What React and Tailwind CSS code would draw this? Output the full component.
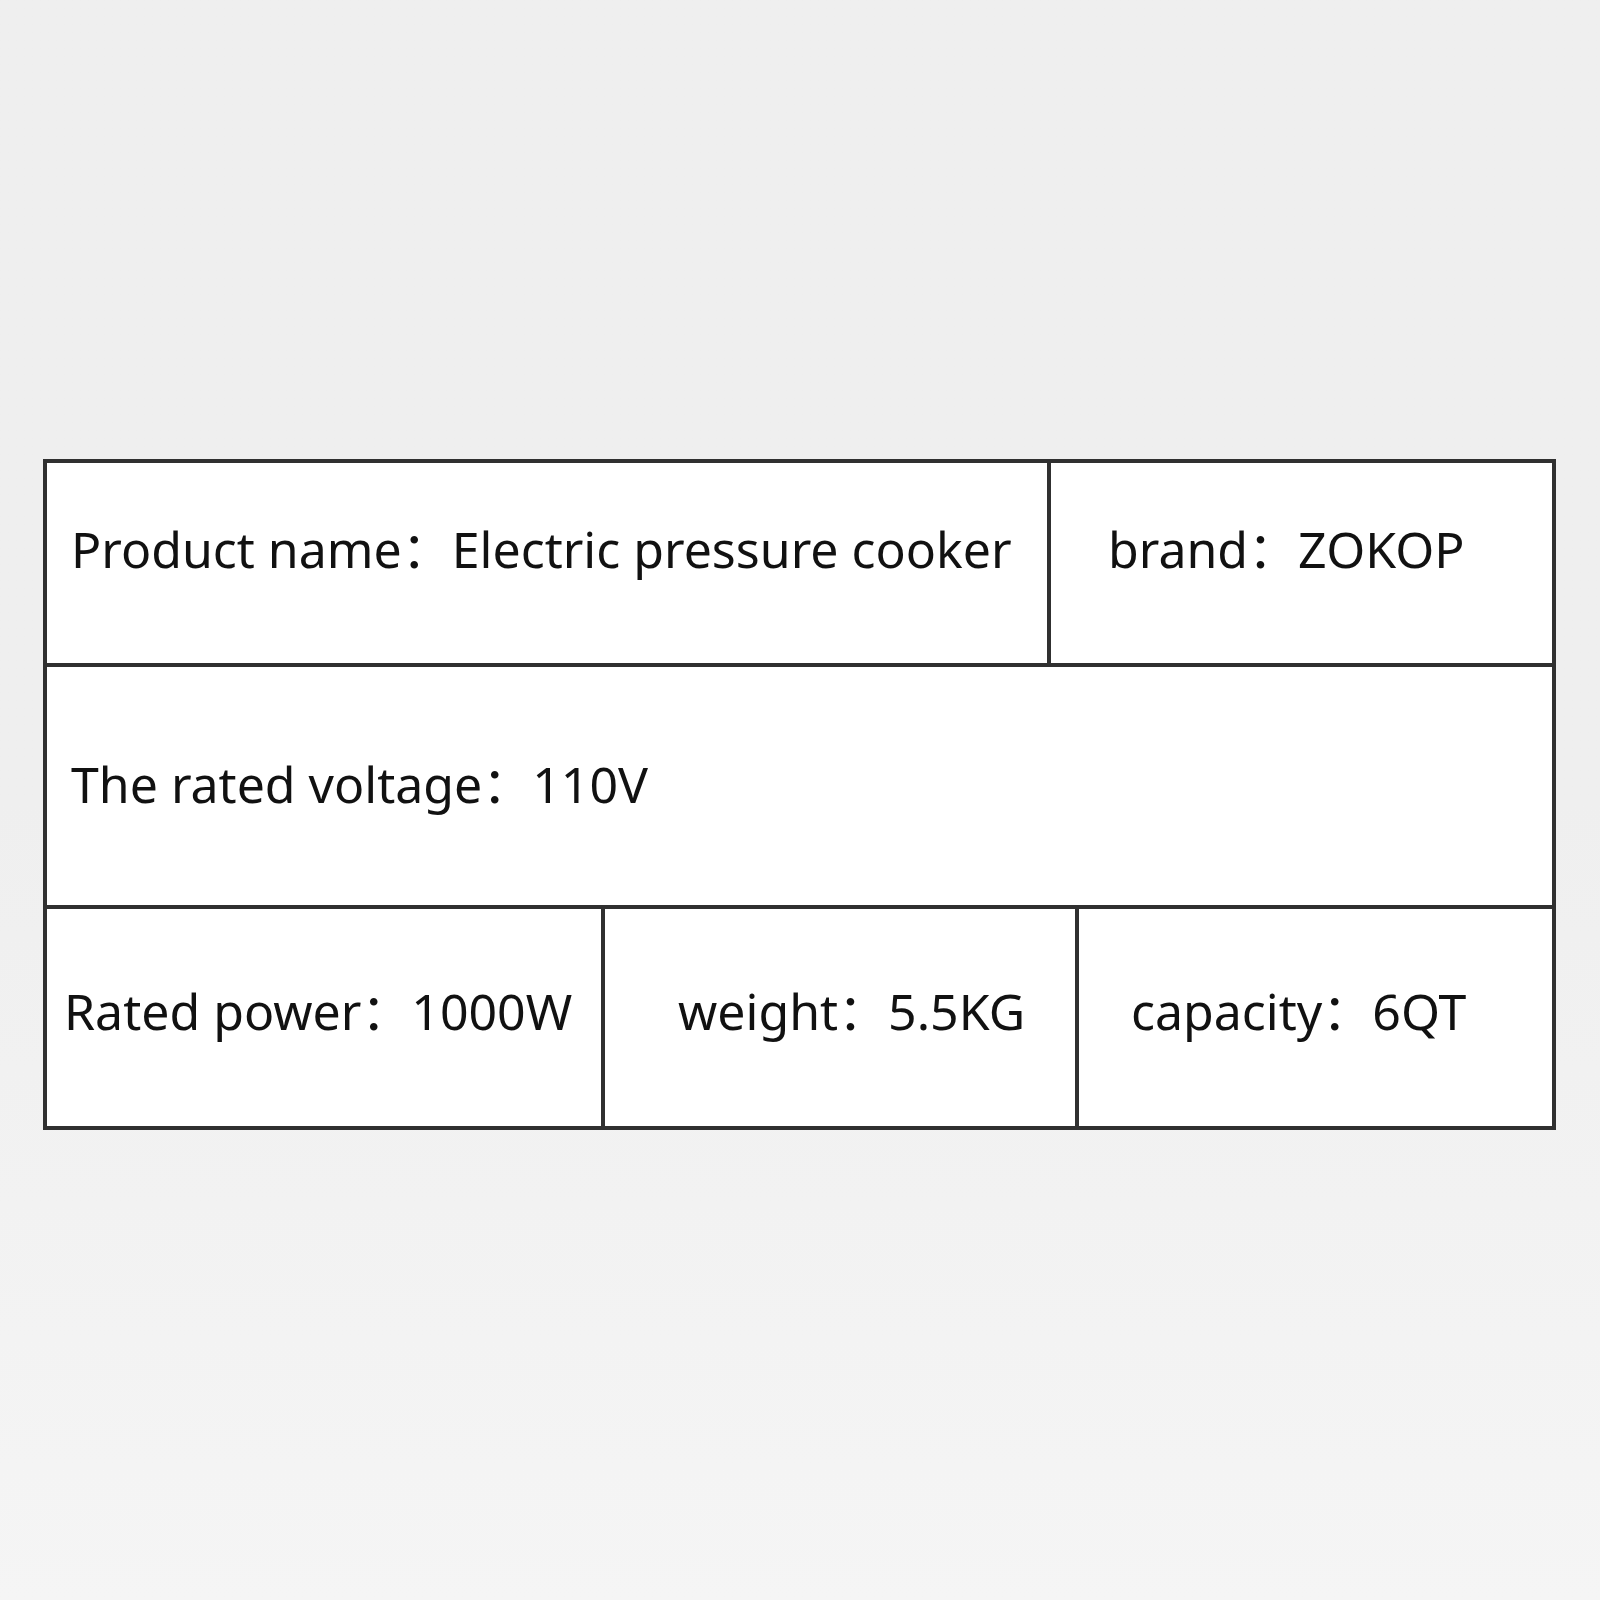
import React from 'react';

const font = { fontFamily: '"Noto Sans", "Noto Sans CJK SC", sans-serif' };

export default function App() {
  return (
    <div
      className="w-[1600px] h-[1600px] bg-gradient-to-b from-[#efefef] via-[#efefef] to-[#f5f5f5] pt-[459px] pl-[43px] text-[#111]"
      style={font}
    >
      <div className="w-[1513px] border-4 border-[#303030] bg-white text-[50px] leading-none whitespace-nowrap">
        {/* row 1 */}
        <div className="flex h-[204px] border-b-4 border-[#303030]">
          <div className="w-[1004px] border-r-4 border-[#303030] flex items-center pl-[24px] pb-[28px]">
            Product name：Electric pressure cooker
          </div>
          <div className="flex-1 flex items-center pl-[57px] pb-[28px]">
            brand：ZOKOP
          </div>
        </div>
        {/* row 2 */}
        <div className="flex h-[242px] items-center pl-[24px] pb-[4px] border-b-4 border-[#303030]">
          The rated voltage：110V
        </div>
        {/* row 3 */}
        <div className="flex h-[217px]">
          <div className="w-[558px] border-r-4 border-[#303030] flex items-center pl-[17px] pb-[14px]">
            Rated power：1000W
          </div>
          <div className="w-[474px] border-r-4 border-[#303030] flex items-center pl-[73px] pb-[14px]">
            weight：5.5KG
          </div>
          <div className="flex-1 flex items-center pl-[52px] pb-[14px]">
            capacity：6QT
          </div>
        </div>
      </div>
    </div>
  );
}
